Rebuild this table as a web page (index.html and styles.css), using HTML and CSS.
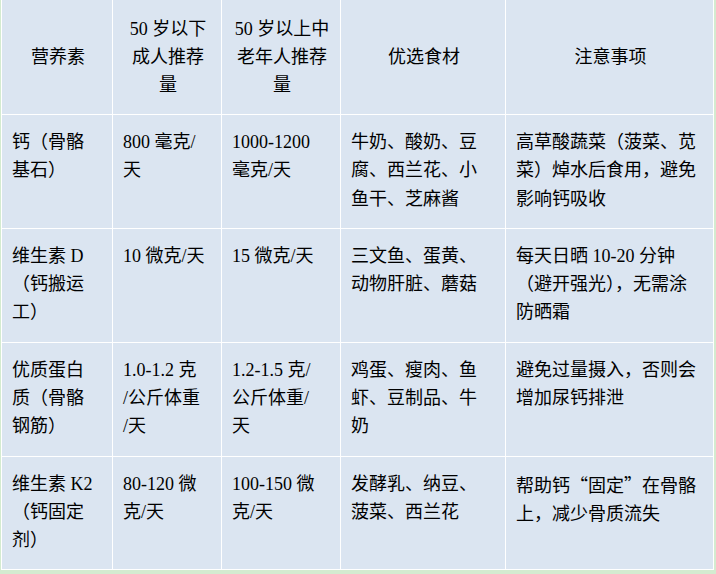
FILE: index.html
```html
<!DOCTYPE html>
<html lang="zh-CN">
<head>
<meta charset="utf-8">
<title>营养素推荐表</title>
<link rel="stylesheet" href="styles.css">
</head>
<body>
<table class="nutri">
  <colgroup>
    <col class="c1"><col class="c2"><col class="c3"><col class="c4"><col class="c5">
  </colgroup>
  <thead>
    <tr class="head">
      <th>营养素</th>
      <th>50 岁以下<br>成人推荐<br>量</th>
      <th>50 岁以上中<br>老年人推荐<br>量</th>
      <th>优选食材</th>
      <th>注意事项</th>
    </tr>
  </thead>
  <tbody>
    <tr>
      <td>钙（骨骼<br>基石）</td>
      <td>800 毫克/<br>天</td>
      <td>1000-1200<br>毫克/天</td>
      <td>牛奶、酸奶、豆<br>腐、西兰花、小<br>鱼干、芝麻酱</td>
      <td>高草酸蔬菜（菠菜、苋<br>菜）焯水后食用，避免<br>影响钙吸收</td>
    </tr>
    <tr>
      <td>维生素 D<br>（钙搬运<br>工）</td>
      <td>10 微克/天</td>
      <td>15 微克/天</td>
      <td>三文鱼、蛋黄、<br>动物肝脏、蘑菇</td>
      <td>每天日晒 10-20 分钟<br>（避开强光），无需涂<br>防晒霜</td>
    </tr>
    <tr>
      <td>优质蛋白<br>质（骨骼<br>钢筋）</td>
      <td>1.0-1.2 克<br>/公斤体重<br>/天</td>
      <td>1.2-1.5 克/<br>公斤体重/<br>天</td>
      <td>鸡蛋、瘦肉、鱼<br>虾、豆制品、牛<br>奶</td>
      <td>避免过量摄入，否则会<br>增加尿钙排泄</td>
    </tr>
    <tr class="last">
      <td>维生素 K2<br>（钙固定<br>剂）</td>
      <td>80-120 微<br>克/天</td>
      <td>100-150 微<br>克/天</td>
      <td>发酵乳、纳豆、<br>菠菜、西兰花</td>
      <td>帮助钙<span class="cjk">“</span>固定<span class="cjk">”</span>在骨骼<br>上，减少骨质流失</td>
    </tr>
  </tbody>
</table>
</body>
</html>
```
FILE: styles.css
```css
html {
  background: #d4ebd0;
}
body {
  margin: 0;
  padding: 0 0 4px 1px;
}
.nutri {
  margin-top: -1px;
  width: 713px;
  table-layout: fixed;
  border-collapse: separate;
  border-spacing: 1px;
  background: #ffffff;
  font-family: "Liberation Serif", "Noto Sans CJK SC", serif;
  font-size: 18px;
  line-height: 28.3px;
  color: #000000;
}
.c1 { width: 110px; }
.c2 { width: 108px; }
.c3 { width: 118px; }
.c4 { width: 164px; }
.c5 { width: 207px; }
.nutri th,
.nutri td {
  background: #dbe5f1;
  padding: 13px 8px 15px 10px;
  vertical-align: top;
  text-align: left;
  font-weight: 400;
}
.nutri th {
  height: 86px;
  padding-top: 14px;
  padding-bottom: 14px;
  text-align: center;
  vertical-align: middle;
}
.nutri .last td {
  padding-bottom: 14px;
}
.cjk {
  font-family: "Noto Sans CJK SC", sans-serif;
}
```
